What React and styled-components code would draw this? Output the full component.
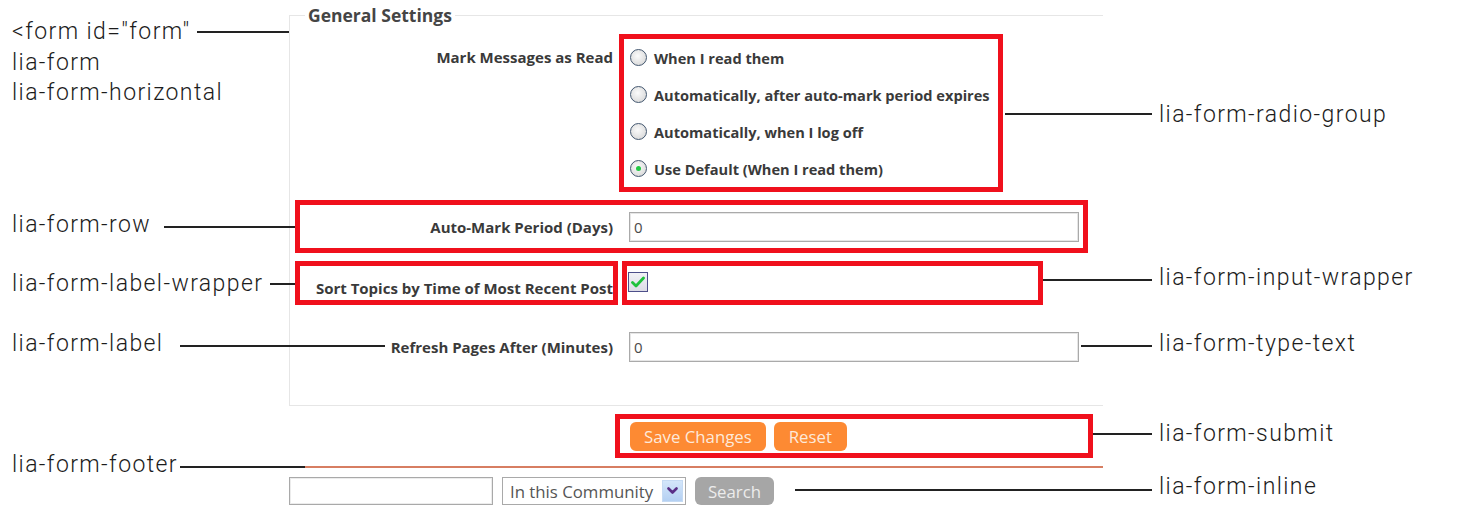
import React from 'react';
import styled, { createGlobalStyle, css } from 'styled-components';

const Global = createGlobalStyle`
  html, body { margin: 0; padding: 0; background: #fff; }
  body { width: 1457px; height: 526px; overflow: hidden; }
  * { box-sizing: border-box; }
`;

const RED = '#f0101c';

const Canvas = styled.div`
  position: relative;
  width: 1457px;
  height: 526px;
  font-family: "Open Sans", "Liberation Sans", sans-serif;
  color: #3a3a3a;
`;

const FormColumn = styled.form`
  width: 814px;
  margin-left: 289px;
  padding-top: 5px;
`;

const Fieldset = styled.fieldset`
  margin: 0;
  padding: 14px 0 29px 0;
  border: 1px solid #e6e6e6;
  border-right: none;
  min-width: 0;
`;

const Legend = styled.legend`
  margin-left: 15px;
  padding: 0 3px;
  font-size: 17.5px;
  font-weight: 700;
  line-height: 20px;
  color: #454545;
`;

const Rows = styled.div`
  display: flex;
  flex-direction: column;
  gap: 18px;
`;

const marked = css`
  outline: 5px solid ${RED};
  outline-offset: 0;
`;

const Row = styled.div`
  display: grid;
  grid-template-columns: 313px 1fr;
  column-gap: 16px;
  align-items: ${p => p.$align || 'center'};
  height: ${p => p.$h}px;
  margin: 0 20px 0 10px;
  ${p => p.$mark && marked}
`;

const LabelWrapper = styled.div`
  display: flex;
  justify-content: flex-end;
  align-items: ${p => p.$v || 'center'};
  height: 100%;
  padding-bottom: ${p => (p.$v === 'flex-end' ? 2 : 0)}px;
  ${p => p.$mark && marked}
`;

const Label = styled.label`
  font-size: 15px;
  font-weight: 700;
  line-height: ${p => p.$lh || 20}px;
  color: #3a3a3a;
  white-space: nowrap;
  text-align: right;
`;

const RadioGroup = styled.div`
  display: flex;
  flex-direction: column;
  width: 374px;
  margin-left: -5px;
  padding-left: 6px;
  ${marked}
`;

const RadioItem = styled.label`
  display: flex;
  align-items: center;
  gap: 7px;
  height: 37px;
  font-size: 14.6px;
  font-weight: 700;
  color: #3a3a3a;
  white-space: nowrap;
`;

const RadioDot = styled.span`
  width: 17px;
  height: 17px;
  border-radius: 50%;
  border: 1.5px solid #43576f;
  background: radial-gradient(circle at 45% 40%, #fbfbfb 0%, #e2e2e2 60%, #cfcfcf 100%);
  display: flex;
  align-items: center;
  justify-content: center;
  flex: none;
  &::after {
    content: '';
    width: 5px;
    height: 5px;
    border-radius: 50%;
    background: ${p => (p.$checked ? '#22c845' : 'transparent')};
  }
`;

const InputWrapper = styled.div`
  display: flex;
  align-items: ${p => (p.$top ? 'flex-start' : 'center')};
  height: 100%;
  width: ${p => p.$w || 'auto'};
  margin-left: ${p => p.$ml || 0}px;
  padding-top: ${p => (p.$top ? 6 : 0)}px;
  padding-left: ${p => p.$pl || 0}px;
  ${p => p.$mark && marked}
`;

const TextInput = styled.input`
  width: 450px;
  height: 30px;
  border: 1px solid #aaaaaa;
  box-shadow: inset 0 0 0 1px #e6e6e6;
  padding: 0 4px;
  font-family: "Open Sans", "Liberation Sans", sans-serif;
  font-size: 15px;
  color: #4a4a4a;
  background: #fff;
  outline: none;
`;

const CheckBox = styled.span`
  width: 20px;
  height: 20px;
  border: 1px solid #4d4f8a;
  background: linear-gradient(#f2f2f6, #dcdce6);
  display: flex;
  align-items: center;
  justify-content: center;
`;

const Submit = styled.div`
  display: flex;
  align-items: center;
  gap: 8px;
  width: 468px;
  height: 34px;
  margin: 13px 0 0 331px;
  padding-left: 10px;
  ${marked}
`;

const OrangeButton = styled.button`
  height: 29px;
  padding: 0 ${p => p.$px}px;
  border: none;
  border-radius: 6px;
  background: #fd8a33;
  color: #fde9da;
  font-family: "Open Sans", "Liberation Sans", sans-serif;
  font-size: 16.8px;
  line-height: 29px;
  cursor: pointer;
`;

const FooterLine = styled.div`
  margin-top: 13px;
  height: 2px;
  background: #d77e62;
`;

const Inline = styled.div`
  display: flex;
  align-items: center;
  gap: 9px;
  margin-top: 9px;
`;

const SearchInput = styled.input`
  width: 204px;
  height: 28px;
  border: 1px solid #a9a9a9;
  box-shadow: inset 0 0 0 1px #ececec;
  outline: none;
`;

const Select = styled.div`
  display: flex;
  align-items: center;
  justify-content: space-between;
  width: 184px;
  height: 28px;
  border: 1px solid #a9a9a9;
  padding: 0 2px 0 7px;
  font-size: 16.8px;
  color: #555;
  white-space: nowrap;
`;

const SelectArrow = styled.span`
  width: 21px;
  height: 22px;
  flex: none;
  background: linear-gradient(#d4e6fa, #b4d0f2);
  border: 1px solid #c5daf3;
  display: flex;
  align-items: center;
  justify-content: center;
`;

const GrayButton = styled.button`
  width: 79px;
  height: 28px;
  border: none;
  border-radius: 6px;
  background: #a6a6a6;
  color: #ececec;
  font-family: "Open Sans", "Liberation Sans", sans-serif;
  font-size: 16.8px;
  padding: 0;
`;

const Note = styled.div`
  position: absolute;
  left: ${p => p.$x}px;
  top: ${p => p.$y}px;
  font-family: Roboto, "Liberation Sans", sans-serif;
  font-weight: 300;
  font-size: 23px;
  letter-spacing: 1.4px;
  line-height: 30.5px;
  color: #1c1c1c;
  white-space: pre;
`;

const Leader = styled.div`
  position: absolute;
  left: ${p => p.$x1}px;
  top: ${p => p.$y}px;
  width: ${p => p.$x2 - p.$x1}px;
  height: 2px;
  background: #222;
`;

const notes = [
  { x: 12, y: 17, text: '<form id="form"\nlia-form\nlia-form-horizontal' },
  { x: 12, y: 210, text: 'lia-form-row' },
  { x: 12, y: 269, text: 'lia-form-label-wrapper' },
  { x: 12, y: 329, text: 'lia-form-label' },
  { x: 12, y: 450, text: 'lia-form-footer' },
  { x: 1159, y: 100, text: 'lia-form-radio-group' },
  { x: 1159, y: 263, text: 'lia-form-input-wrapper' },
  { x: 1159, y: 329, text: 'lia-form-type-text' },
  { x: 1159, y: 419, text: 'lia-form-submit' },
  { x: 1159, y: 472, text: 'lia-form-inline' },
];

const leaders = [
  { x1: 197, x2: 289, y: 31 },
  { x1: 164, x2: 295, y: 226 },
  { x1: 270, x2: 295, y: 283 },
  { x1: 180, x2: 385, y: 345 },
  { x1: 180, x2: 305, y: 466 },
  { x1: 1005, x2: 1152, y: 113 },
  { x1: 1043, x2: 1152, y: 279 },
  { x1: 1081, x2: 1152, y: 345 },
  { x1: 1093, x2: 1152, y: 433 },
  { x1: 795, x2: 1152, y: 489 },
];

const radios = [
  'When I read them',
  'Automatically, after auto-mark period expires',
  'Automatically, when I log off',
  'Use Default (When I read them)',
];

export default function App() {
  return (
    <Canvas>
      <Global />
      <FormColumn id="form" onSubmit={e => e.preventDefault()}>
        <Fieldset>
          <Legend>General Settings</Legend>
          <Rows>
            <Row $h={148} $align="start">
              <LabelWrapper $v="flex-start">
                <Label $lh={37}>Mark Messages as Read</Label>
              </LabelWrapper>
              <RadioGroup>
                {radios.map((r, i) => (
                  <RadioItem key={r}>
                    <RadioDot $checked={i === 3} />
                    {r}
                  </RadioItem>
                ))}
              </RadioGroup>
            </Row>
            <Row $h={43} $mark>
              <LabelWrapper>
                <Label>Auto-Mark Period (Days)</Label>
              </LabelWrapper>
              <InputWrapper>
                <TextInput defaultValue="0" />
              </InputWrapper>
            </Row>
            <Row $h={34}>
              <LabelWrapper $v="flex-end" $mark>
                <Label>Sort Topics by Time of Most Recent Post</Label>
              </LabelWrapper>
              <InputWrapper $top $mark $w="411px" $ml={-2} $pl={1}>
                <CheckBox>
                  <svg width="14" height="12" viewBox="0 0 14 12">
                    <path d="M1.5 6.5 L5 10 L12.5 2" fill="none" stroke="#1fc23c" strokeWidth="2.8" strokeLinecap="round" strokeLinejoin="round" />
                  </svg>
                </CheckBox>
              </InputWrapper>
            </Row>
            <Row $h={58}>
              <LabelWrapper>
                <Label>Refresh Pages After (Minutes)</Label>
              </LabelWrapper>
              <InputWrapper>
                <TextInput defaultValue="0" />
              </InputWrapper>
            </Row>
          </Rows>
        </Fieldset>
        <Submit>
          <OrangeButton type="submit" $px={14}>Save Changes</OrangeButton>
          <OrangeButton type="button" $px={15}>Reset</OrangeButton>
        </Submit>
        <FooterLine />
        <Inline>
          <SearchInput />
          <Select>
            <span>In this Community</span>
            <SelectArrow>
              <svg width="11" height="8" viewBox="0 0 11 8">
                <path d="M1.5 1.5 L5.5 5.5 L9.5 1.5" fill="none" stroke="#5a2f86" strokeWidth="2.6" strokeLinecap="round" strokeLinejoin="round" />
              </svg>
            </SelectArrow>
          </Select>
          <GrayButton type="button">Search</GrayButton>
        </Inline>
      </FormColumn>
      {leaders.map((l, i) => (
        <Leader key={i} $x1={l.x1} $x2={l.x2} $y={l.y} />
      ))}
      {notes.map(n => (
        <Note key={n.text} $x={n.x} $y={n.y}>{n.text}</Note>
      ))}
    </Canvas>
  );
}
